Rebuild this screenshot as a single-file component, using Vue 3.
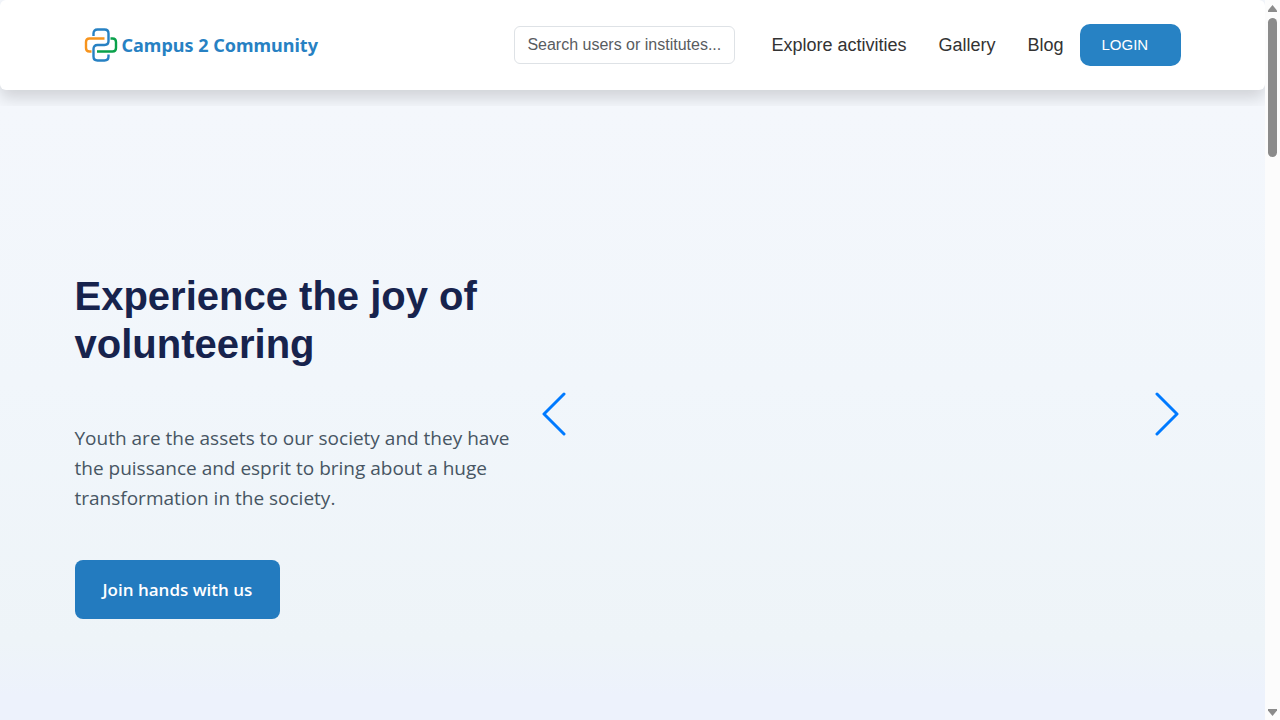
<template>
  <div class="page">
    <div class="content">
      <header class="top">
        <nav class="navbar">
          <div class="container nav-inner">
            <a href="#" class="brand">
              <svg class="brand-mark" viewBox="0 0 34 34" fill="none" stroke-width="2.4">
                <path d="M20.5 10.5H5.5Q2 10.5 2 14V20Q2 23.5 5.5 23.5H7.5" stroke="#f7941d" />
                <path d="M13 23.5H28.5Q32 23.5 32 20V14Q32 10.5 28.5 10.5H26.5" stroke="#0aa14b" />
                <path
                    d="M9.5 8V5.5Q9.5 1.5 13.5 1.5H20.5Q24.5 1.5 24.5 5.5V13Q24.5 17 20.5 17H13.5Q9.5 17 9.5 21V28.5Q9.5 32.5 13.5 32.5H20.5Q24.5 32.5 24.5 28.5V26.5"
                    stroke="#2781c3"
                />
              </svg>
              <span>Campus 2 Community</span>
            </a>
            <input
                v-model="query"
                class="search"
                type="text"
                aria-label="Search users or institutes"
                placeholder="Search users or institutes..."
            />
            <div class="links">
              <a v-for="link in links" :key="link" href="#" class="nav-link">{{ link }}</a>
            </div>
            <button type="button" class="login">LOGIN</button>
          </div>
        </nav>
      </header>

      <main class="hero">
        <div class="container hero-inner">
          <section class="intro">
            <h1>Experience the joy of volunteering</h1>
            <p>
              Youth are the assets to our society and they have the puissance and esprit
              to bring about a huge transformation in the society.
            </p>
            <button type="button" class="join">Join hands with us</button>
          </section>
          <section class="slider">
            <button type="button" class="arrow" aria-label="Previous slide">
              <svg viewBox="0 0 27 44"><path d="M22 2L2 22L22 42" /></svg>
            </button>
            <button type="button" class="arrow" aria-label="Next slide">
              <svg viewBox="0 0 27 44"><path d="M5 2L25 22L5 42" /></svg>
            </button>
          </section>
        </div>
      </main>
    </div>

    <div class="scrollbar" aria-hidden="true">
      <svg class="scroll-arrow" viewBox="0 0 9 7"><path d="M4.5 0L9 5.5V7H0V5.5Z" /></svg>
      <div class="thumb"></div>
      <svg class="scroll-arrow" viewBox="0 0 9 7"><path d="M0 0H9V1.5L4.5 7L0 1.5Z" /></svg>
    </div>
  </div>
</template>

<script setup>
import { ref } from 'vue'

const query = ref('')
const links = ['Explore activities', 'Gallery', 'Blog']
</script>

<style>
body {
  margin: 0;
}
</style>

<style scoped>
* {
  box-sizing: border-box;
}

.page {
  display: flex;
  min-height: 100vh;
  font-family: "Liberation Sans", Arial, sans-serif;
}

.content {
  flex: 1;
  min-width: 0;
  display: flex;
  flex-direction: column;
}

.container {
  width: 100%;
  max-width: 1140px;
  margin: 0 auto;
  padding: 0 12px;
}

.top {
  padding-bottom: 16px;
  background: #f4f7fc;
  overflow: hidden;
}

.navbar {
  padding: 24px 0;
  background: #fff;
  border-radius: 6px;
  box-shadow: 0 8px 16px rgba(0, 0, 0, 0.15);
}

.nav-inner {
  display: flex;
  align-items: center;
  padding: 0 22px 0 21px;
}

.brand {
  display: flex;
  align-items: center;
  gap: 4px;
  margin-right: auto;
  color: #2781c3;
  font: bold 18px/24px "Noto Sans", "Open Sans", sans-serif;
  text-decoration: none;
  white-space: nowrap;
}

.brand-mark {
  width: 34px;
  height: 34px;
}

.search {
  width: 221px;
  height: 38px;
  padding: 0 12px;
  border: 1px solid #dee2e6;
  border-radius: 6px;
  background: #fff;
  color: #212529;
  font: 16px/24px "Liberation Sans", Arial, sans-serif;
}

.search::placeholder {
  color: #595c5f;
  opacity: 1;
}

.links {
  display: flex;
  gap: 32px;
  padding: 0 16px 0 36px;
}

.nav-link {
  color: #333;
  font-size: 18px;
  line-height: 24px;
  text-decoration: none;
  white-space: nowrap;
}

.login {
  width: 101px;
  height: 42px;
  padding: 0 22px;
  border: 0;
  border-radius: 10px;
  background: #2782c4;
  color: #fff;
  font: 15px/24px "Liberation Sans", Arial, sans-serif;
  text-align: left;
}

.hero {
  flex: 1;
  display: flex;
  background: linear-gradient(#f4f7fc 0%, #f1f6fb 45%, #eef4f8 87%, #edf2fc 96%, #edf2fc 100%);
}

.hero-inner {
  display: flex;
}

.intro {
  width: 41%;
  padding: 166px 0 100px;
}

h1 {
  margin: 0 0 55px;
  color: #17234d;
  font-size: 40px;
  line-height: 48px;
}

p {
  margin: 0 0 47px;
  color: #475563;
  font: 19px/30px "Open Sans", "Segoe UI", sans-serif;
}

.join {
  height: 59px;
  padding: 0 28px;
  border: 0;
  border-radius: 8px;
  background: #237bbf;
  color: #fff;
  font: 600 17px/24px "Open Sans", "Segoe UI", sans-serif;
  white-space: nowrap;
}

.slider {
  flex: 1;
  display: flex;
  align-items: center;
  justify-content: space-between;
  padding: 2px 12px 0 10px;
}

.arrow {
  width: 27px;
  height: 44px;
  padding: 0;
  border: 0;
  background: none;
}

.arrow svg {
  display: block;
  width: 27px;
  height: 44px;
  fill: none;
  stroke: #007aff;
  stroke-width: 3;
  stroke-linecap: round;
  stroke-linejoin: round;
}

.scrollbar {
  position: sticky;
  top: 0;
  width: 15px;
  height: 100vh;
  display: flex;
  flex-direction: column;
  align-items: center;
  padding: 5px 0 4px;
  background: #fcfcfc;
}

.scroll-arrow {
  width: 9px;
  height: 7px;
  fill: #8b8b8b;
}

.thumb {
  width: 9px;
  height: 139px;
  margin: 6px 0 auto;
  border-radius: 5px;
  background: #8b8b8b;
}
</style>
